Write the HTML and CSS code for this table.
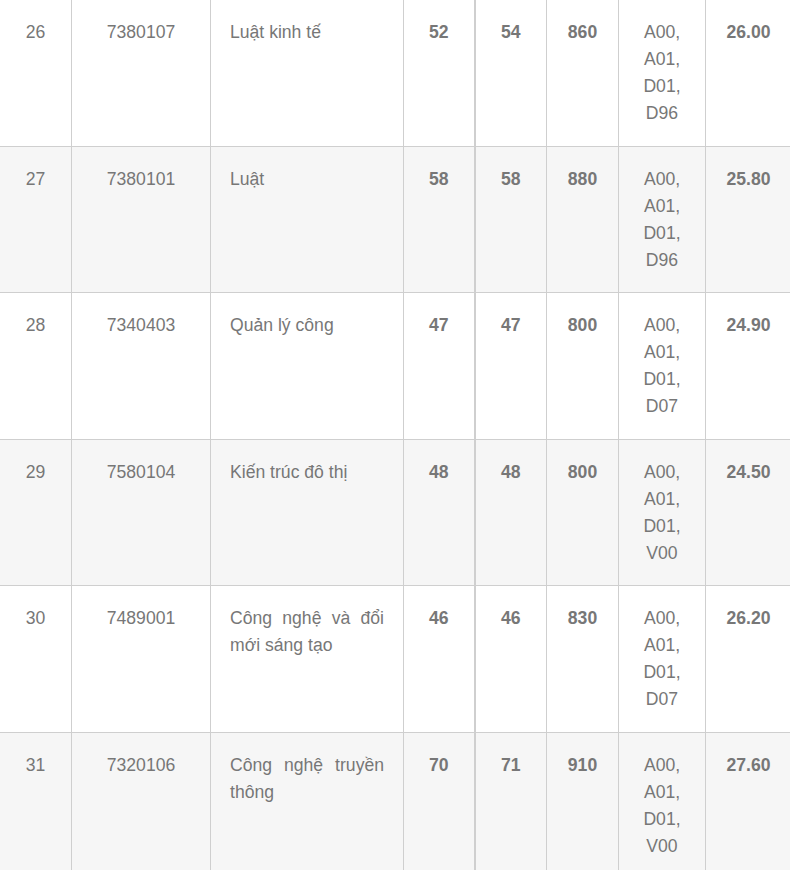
FILE: index.html
```html
<!DOCTYPE html>
<html lang="vi">
<head>
<meta charset="utf-8">
<title>Bảng điểm chuẩn</title>
<link rel="stylesheet" href="styles.css">
</head>
<body>
<table class="scores">
  <colgroup>
    <col class="c-stt">
    <col class="c-code">
    <col class="c-name">
    <col class="c-n1">
    <col class="c-n2">
    <col class="c-n3">
    <col class="c-combo">
    <col class="c-score">
  </colgroup>
  <tbody>
    <tr>
      <td class="center">26</td>
      <td class="center">7380107</td>
      <td class="name">Luật kinh tế</td>
      <td class="center bold sep">52</td>
      <td class="center bold">54</td>
      <td class="center bold">860</td>
      <td class="center">A00, A01, D01, D96</td>
      <td class="center bold">26.00</td>
    </tr>
    <tr>
      <td class="center">27</td>
      <td class="center">7380101</td>
      <td class="name">Luật</td>
      <td class="center bold sep">58</td>
      <td class="center bold">58</td>
      <td class="center bold">880</td>
      <td class="center">A00, A01, D01, D96</td>
      <td class="center bold">25.80</td>
    </tr>
    <tr>
      <td class="center">28</td>
      <td class="center">7340403</td>
      <td class="name">Quản lý công</td>
      <td class="center bold sep">47</td>
      <td class="center bold">47</td>
      <td class="center bold">800</td>
      <td class="center">A00, A01, D01, D07</td>
      <td class="center bold">24.90</td>
    </tr>
    <tr>
      <td class="center">29</td>
      <td class="center">7580104</td>
      <td class="name">Kiến trúc đô thị</td>
      <td class="center bold sep">48</td>
      <td class="center bold">48</td>
      <td class="center bold">800</td>
      <td class="center">A00, A01, D01, V00</td>
      <td class="center bold">24.50</td>
    </tr>
    <tr>
      <td class="center">30</td>
      <td class="center">7489001</td>
      <td class="name">Công nghệ và đổi mới sáng tạo</td>
      <td class="center bold sep">46</td>
      <td class="center bold">46</td>
      <td class="center bold">830</td>
      <td class="center">A00, A01, D01, D07</td>
      <td class="center bold">26.20</td>
    </tr>
    <tr>
      <td class="center">31</td>
      <td class="center">7320106</td>
      <td class="name">Công nghệ truyền thông</td>
      <td class="center bold sep">70</td>
      <td class="center bold">71</td>
      <td class="center bold">910</td>
      <td class="center">A00, A01, D01, V00</td>
      <td class="center bold">27.60</td>
    </tr>
  </tbody>
</table>
</body>
</html>
```
FILE: styles.css
```css
html, body {
  margin: 0;
  padding: 0;
  background: #ffffff;
  overflow: hidden;
}

.scores {
  border-collapse: collapse;
  table-layout: fixed;
  width: 792px;
  margin: -1px 0 0 -1px;
  font-family: "Liberation Sans", Arial, sans-serif;
  font-size: 17.6px;
  line-height: 27px;
  color: #777777;
}

.c-stt { width: 72px; }
.c-code { width: 139px; }
.c-name { width: 193px; }
.c-n1 { width: 71px; }
.c-n2 { width: 72px; }
.c-n3 { width: 72px; }
.c-combo { width: 87px; }
.c-score { width: 86px; }

.scores td {
  border: 1px solid #cfcfcf;
  padding: 19px 19px 18.5px;
  vertical-align: top;
}

.scores tr:nth-child(even) td {
  background: #f6f6f6;
}

.center {
  text-align: center;
}

.name {
  text-align: justify;
}

.bold {
  font-weight: bold;
}

.scores td.sep {
  border-right: 2px solid #cfcfcf;
}
```
